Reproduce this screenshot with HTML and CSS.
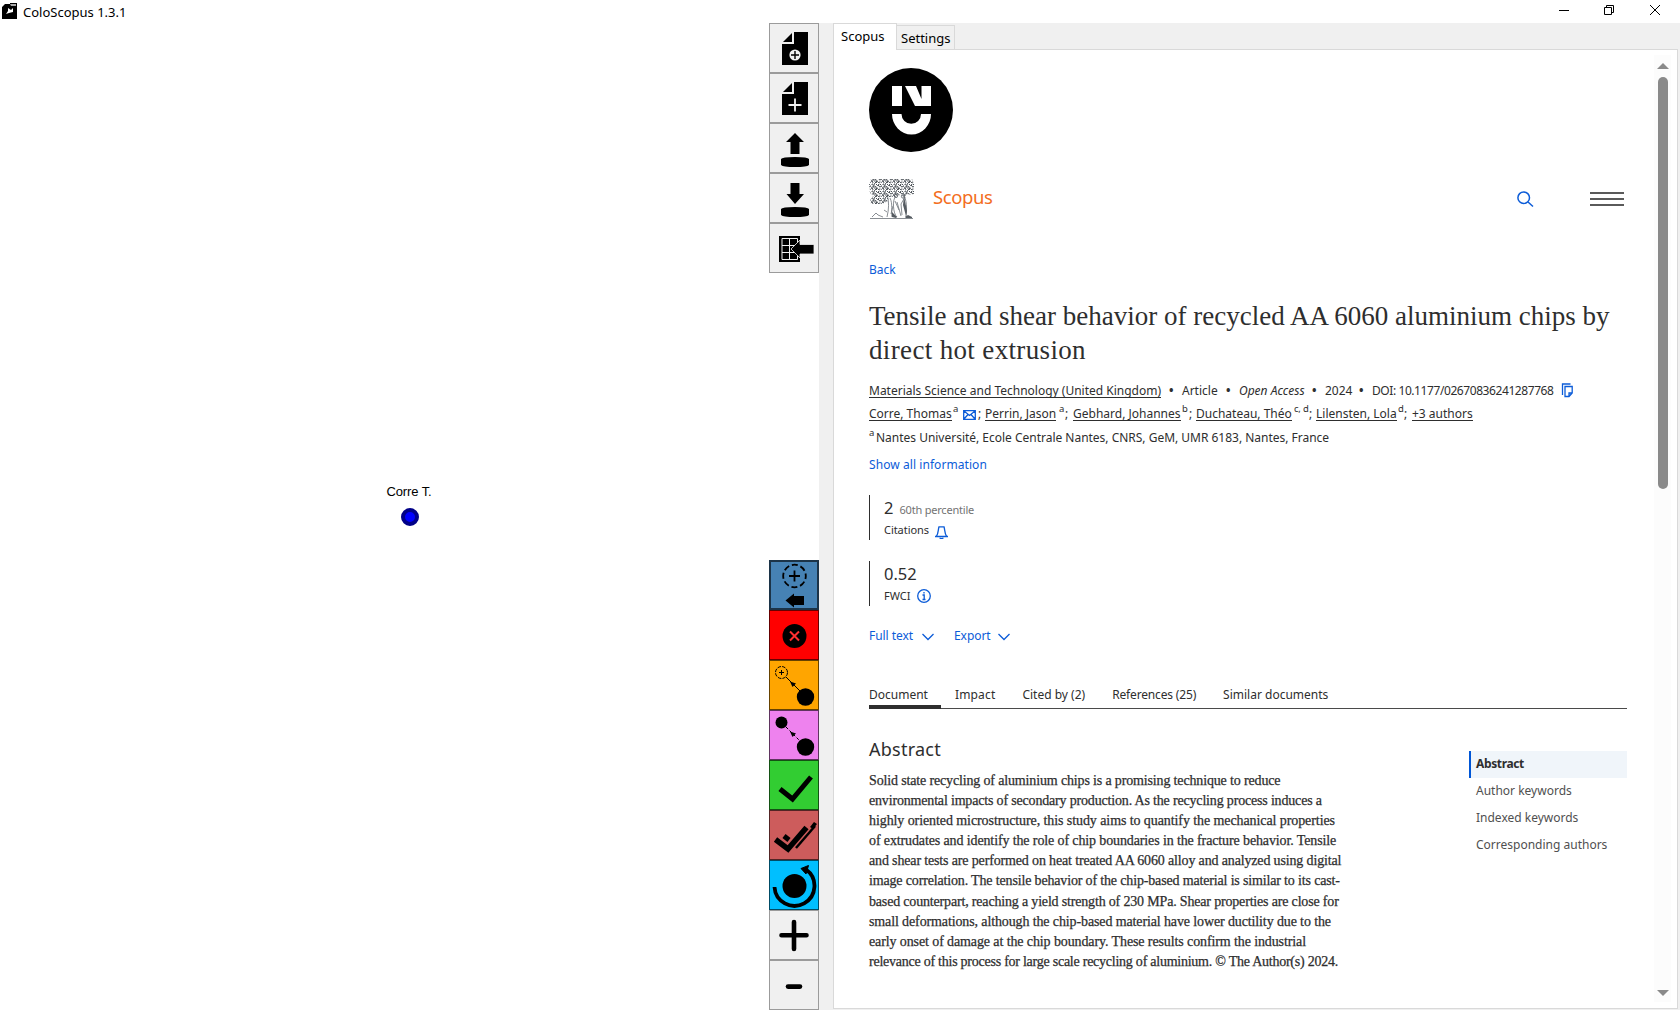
FILE: index.html
```html
<!DOCTYPE html>
<html lang="en">
<head>
<meta charset="utf-8">
<title>ColoScopus 1.3.1</title>
<link rel="stylesheet" href="styles.css">
</head>
<body>
<header class="titlebar">
  <svg class="app-icon" width="16" height="16" viewBox="0 0 16 16"><path d="M0 4L3 1H8V0H15V16H0Z"/><path d="M8 1h6v2H9z" fill="#aaa"/><path d="M6 5l3 2 2-2v4l-4 1-3 1 2-3z" fill="#fff"/></svg>
  <span class="app-title t">ColoScopus 1.3.1</span>
  <div class="win-controls">
    <svg width="10" height="10" viewBox="0 0 10 10"><path d="M0 5.5H10"/></svg>
    <svg width="10" height="10" viewBox="0 0 10 10"><path d="M.5 2.5h7v7h-7zM2.5 2.5v-2h7v7h-2"/></svg>
    <svg width="10" height="10" viewBox="0 0 10 10"><path d="M0 0L10 10M10 0L0 10"/></svg>
  </div>
</header>
<main class="workspace">
  <section class="graph">
    <div class="node"><span class="node-label t">Corre T.</span><i class="node-dot"></i></div>
  </section>
  <nav class="toolbar">
    <div class="tool-group">
      <button class="tool"><svg viewBox="0 0 50 50"><path d="M25 9H39V42H13V21H25Z"/><path d="M23 10V19H14Z"/><circle cx="26" cy="32" r="5.6" fill="#f0f0f0"/><path d="M22 32h8M26 28v8" stroke="#000" stroke-width="1.4"/></svg></button>
      <button class="tool"><svg viewBox="0 0 50 50"><path d="M25 9H39V42H13V21H25Z"/><path d="M23 10V19H14Z"/><path d="M19.500 32h13M26 25.500v13" stroke="#f0f0f0" stroke-width="1.8"/></svg></button>
      <button class="tool"><svg viewBox="0 0 50 50"><path d="M26 10L35 19H30.500V31H21.500V19H17Z"/><path d="M12 36Q13 34 26 34T40 36V42Q38 44 26 44T12 42Z"/></svg></button>
      <button class="tool"><svg viewBox="0 0 50 50"><path d="M26 31L17.500 21H21.500V10H30.500V21H35Z"/><path d="M12 36Q13 34 26 34T40 36V42Q38 44 26 44T12 42Z"/></svg></button>
      <button class="tool"><svg viewBox="0 0 50 50"><path d="M10 13H31V39H10Z"/><path d="M13 15.500H28.500V36.500H13ZM20.500 15.500v21M13 22.500h15.500M13 29.500h15.500" fill="none" stroke="#f0f0f0"/><path d="M22 26L31 17V21.500H45V31H31V35Z" stroke="#f0f0f0" stroke-width=".8"/></svg></button>
    </div>
    <div class="tool-group">
      <button class="tool tool-steel"><svg viewBox="0 0 50 50"><circle cx="25.500" cy="16" r="11.300" fill="none" stroke="#000" stroke-width="1.8" stroke-dasharray="6 2.870" stroke-dashoffset="3"/><path d="M20 16h11M25.500 10.500v11" stroke="#000" stroke-width="1.800"/><path d="M16.500 40.500L25 33.500V36H35V45H25V47.500Z"/></svg></button>
      <button class="tool tool-red"><svg viewBox="0 0 50 50"><circle cx="25.500" cy="26" r="12"/><path d="M21 21.500l9 9M30 21.500l-9 9" stroke="#ff3030" stroke-width="2"/></svg></button>
      <button class="tool tool-orange"><svg viewBox="0 0 50 50"><circle cx="12.500" cy="12.500" r="6" fill="none" stroke="#000" stroke-dasharray="3.500 1.200"/><path d="M10 12.500h5M12.500 10v5M17 17L31 31" stroke="#000"/><path d="M21 21.500L27 23.500L23.500 27Z"/><circle cx="36.500" cy="37" r="8.700"/></svg></button>
      <button class="tool tool-violet"><svg viewBox="0 0 50 50"><circle cx="12.500" cy="12.500" r="6"/><path d="M17 17L31 31" stroke="#000" stroke-dasharray="3 2"/><path d="M21 21.500L27 23.500L23.500 27Z"/><circle cx="36.500" cy="37" r="8.700"/></svg></button>
      <button class="tool tool-green"><svg viewBox="0 0 50 50"><path d="M11 29L23.500 39L42 17" fill="none" stroke="#000" stroke-width="5"/></svg></button>
      <button class="tool tool-brick"><svg viewBox="0 0 50 50"><path d="M6.500 29.500L19 39L37.500 17.500" fill="none" stroke="#000" stroke-width="5.500"/><path d="M15 26l5 4" stroke="#000" stroke-width="5"/><path d="M27 38L46 16" stroke="#000" stroke-width="2.500"/><path d="M41 17l4-5 3 2-4 5z"/></svg></button>
      <button class="tool tool-sky"><svg viewBox="0 0 50 50"><circle cx="25.500" cy="26" r="12"/><path d="M5.500 27A20 20 0 1 0 37 9.500" fill="none" stroke="#000" stroke-width="3.800"/><path d="M32 8.500L39.500 5.500L37 14Z" stroke="#000"/></svg></button>
      <button class="tool"><svg viewBox="0 0 50 50"><path d="M12.500 25.300h25M25 12v27" stroke="#000" stroke-width="4.600" stroke-linecap="round"/></svg></button>
      <button class="tool"><svg viewBox="0 0 50 50"><path d="M19 26.600h12" stroke="#000" stroke-width="4.600" stroke-linecap="round"/></svg></button>
    </div>
  </nav>
  <section class="side">
    <div class="side-tabs">
      <span class="side-tab active"><span class="t">Scopus</span></span><span class="side-tab"><span class="t">Settings</span></span>
    </div>
    <div class="browser">
      <article class="page">
        <svg class="nu-logo" viewBox="0 0 84 84"><circle cx="42" cy="42" r="42"/><path d="M23 18h10v20H23zM36 18H47L52.500 31V18H62V38H46ZM23 46h9.500a9.700 9.700 0 0 0 19.500 0h10a19.500 20.500 0 0 1-39 0z" fill="#fff"/></svg>
        <div class="brand">
          <svg class="tree" viewBox="0 0 45 40">
            <defs><pattern id="leaf" width="11" height="7" patternUnits="userSpaceOnUse"><path d="M0 1q1.500-1.500 2 0t2-.5 1 1.500M6 .5q2 0 1 1.500t2 0M10 0l1 1.500M.5 3q1 1 2-.5t1.500 1.500M5.500 2.500l1.500 1.500 1-1.500M9 4q1-2 2-.5M0 5l1.500 1.500M2.500 5.500q1.500-1.500 1.500 .5t2-.5M7 5l1.500 1.500 2-1.500M5 5.500l1-1.500M9.500 5.500v1.500" fill="none" stroke="#3f464c" stroke-width=".95"/></pattern></defs>
            <path fill="url(#leaf)" d="M2 0H43L45 4V15L42 16L38 15L35 18L30 16L25 18L20 18L19 22L13 25L2 25L1 19L5 17L1 14L0 6Z"/>
            <path d="M18.500 17C20 23 20 30 18 38M21 19C24 25 22 32 23 38M27 17C23 20 24 35 28 38M28 23L32 37M26 22L30 31M34 15C38 20 38 31 37 38M36 18L32 25L33 36M24 27L22 35M3 38l4-4 2 2 5 2M15 31l3 2M1 39.500h43" fill="none" stroke="#6b7177" stroke-width=".8"/>
            <path d="M23 33L28 38L27 39L23 38ZM35 17L38 32L37 37L34 26ZM36 38l3-2 4 2v1h-6z" fill="#555b61"/>
            <circle cx="27" cy="17" r="1.600" fill="none" stroke="#555b61" stroke-width=".8"/><circle cx="34" cy="17.500" r="1.600" fill="none" stroke="#555b61" stroke-width=".8"/>
          </svg>
          <span class="brand-name t">Scopus</span>
          <svg class="search" width="17" height="17" viewBox="0 0 17 17"><circle cx="6.700" cy="6.700" r="5.800"/><path d="M11 11L16 15.500"/></svg>
          <span class="menu"><i></i><i></i><i></i></span>
        </div>
        <a class="line back"><span class="t">Back</span></a>
        <h1><span class="h1a t">Tensile and shear behavior of recycled AA 6060 aluminium chips by</span><span class="h1b t">direct hot extrusion</span></h1>
        <div class="line meta">
          <span><u class="t">Materials Science and Technology (United Kingdom)</u></span><b>•</b>
          <span class="t m2">Article</span><b>•</b><em class="t">Open Access</em><b>•</b>
          <span class="t">2024</span><b>•</b><span class="doi t">DOI: 10.1177/02670836241287768</span>
          <svg class="copy" width="12" height="15" viewBox="0 0 12 15"><path d="M1.500 12V1H9.500M4 3.500h7.200v6.500L8 13.500H4zM11 10H8v3.500" /></svg>
        </div>
        <div class="line authors">
          <span><u class="t">Corre, Thomas</u></span><sup>a</sup>
          <svg class="mail" width="13" height="10" viewBox="0 0 13 10"><path d="M.700.700h11.600v8.600H.700zM1 1l5.500 4.500L12 1M1 9l4-4.500M12 9L8 4.500"/></svg><span>;</span>
          <span><u class="t">Perrin, Jason</u></span><sup>a</sup><span>;</span>
          <span><u class="t">Gebhard, Johannes</u></span><sup>b</sup><span>;</span>
          <span><u class="t">Duchateau, Théo</u></span><sup class="t">c, d</sup><span>;</span>
          <span><u class="t">Lilensten, Lola</u></span><sup>d</sup><span>;</span>
          <span><u class="t">+3 authors</u></span>
        </div>
        <div class="line affil"><sup>a</sup><span class="t">Nantes Université, Ecole Centrale Nantes, CNRS, GeM, UMR 6183, Nantes, France</span></div>
        <a class="line show-all"><span class="t">Show all information</span></a>
        <div class="metric">
          <div class="metric-value"><span class="num">2</span><small class="t">60th percentile</small></div>
          <div class="metric-name"><span class="t">Citations</span><svg class="bell" width="13" height="13" viewBox="0 0 13 13"><path d="M0 10.500H13M1.500 10.200C3.500 7 3 4 4 .800H9C10 4 9.500 7 11.500 10.200"/><path d="M4.500 12l2 .7 2-.7"/></svg></div>
        </div>
        <div class="metric metric-fwci">
          <div class="metric-value"><span class="num t">0.52</span></div>
          <div class="metric-name"><span class="t">FWCI</span><svg class="info" width="14" height="14" viewBox="0 0 14 14"><circle cx="7" cy="7" r="6.300"/><path d="M7 3v1.500M5.500 6h1.700v4.500M5.500 10.500h3"/></svg></div>
        </div>
        <div class="line actions">
          <a class="t">Full text</a><svg width="12" height="8" viewBox="0 0 12 8"><path d="M.500 1L6 6.500L11.500 1"/></svg>
          <a class="t">Export</a><svg width="12" height="8" viewBox="0 0 12 8"><path d="M.500 1L6 6.500L11.500 1"/></svg>
        </div>
        <nav class="doc-tabs">
          <span class="current">Document</span><span class="impact">Impact</span><span>Cited by (2)</span><span class="refs">References (25)</span><span>Similar documents</span>
        </nav>
        <div class="body">
          <section class="abstract">
            <h2>Abstract</h2>
            <p>
              <span class="t p1">Solid state recycling of aluminium chips is a promising technique to reduce</span>
              <span class="t p2">environmental impacts of secondary production. As the recycling process induces a</span>
              <span class="t p3">highly oriented microstructure, this study aims to quantify the mechanical properties</span>
              <span class="t p4">of extrudates and identify the role of chip boundaries in the fracture behavior. Tensile</span>
              <span class="t p5">and shear tests are performed on heat treated AA 6060 alloy and analyzed using digital</span>
              <span class="t p6">image correlation. The tensile behavior of the chip-based material is similar to its cast-</span>
              <span class="t p7">based counterpart, reaching a yield strength of 230 MPa. Shear properties are close for</span>
              <span class="t p8">small deformations, although the chip-based material have lower ductility due to the</span>
              <span class="t p9">early onset of damage at the chip boundary. These results confirm the industrial</span>
              <span class="t p10">relevance of this process for large scale recycling of aluminium. © The Author(s) 2024.</span>
            </p>
          </section>
          <nav class="toc">
            <a class="here">Abstract</a><a>Author keywords</a><a>Indexed keywords</a><a>Corresponding authors</a>
          </nav>
        </div>
      </article>
      <div class="scrollbar"><i class="up"></i><i class="thumb"></i><i class="down"></i></div>
    </div>
  </section>
</main>
</body>
</html>
```
FILE: styles.css
```css
* { box-sizing: border-box; }
body { margin: 0; width: 1680px; height: 1010px; overflow: hidden; background: #fff; color: #2e2e2e; font: 12px/19px "Noto Sans", sans-serif; display: flex; flex-direction: column; }
svg { display: block; flex: none; }
.t { white-space: nowrap; }

.titlebar { height: 23px; flex: none; display: flex; align-items: flex-start; padding: 3px 20px 0 2px; color: #000; font-size: 13px; line-height: 18px; }
.app-title { margin: 0 auto 0 5px; }
.win-controls { display: flex; gap: 35px; padding-top: 2px; }
.win-controls svg { fill: none; stroke: #000; stroke-width: 1; }
.win-controls svg:last-child { margin-left: 1px; }

.workspace { flex: 1; display: flex; min-height: 0; background: #f0f0f0; }
.graph { width: 769px; background: #fff; position: relative; }
.node { position: absolute; left: 369px; top: 460px; width: 81px; display: flex; flex-direction: column; align-items: center; gap: 7px; }
.node-label { font: 13px/18px "Liberation Sans", sans-serif; letter-spacing: -.12px; margin-left: -1px; color: #000; }
.node-dot { width: 18px; height: 18px; border-radius: 50%; background: #00f; border: 4px solid #000088; }

.toolbar { width: 50px; background: #fff; display: flex; flex-direction: column; justify-content: space-between; }
.tool { display: block; width: 50px; height: 50px; padding: 0; border: 1px solid #9b9b9b; background: #f0f0f0; }
.tool svg { width: 50px; height: 50px; margin: -1px; }
.tool-steel { background: #4682b4; border: 2px solid #1c3448; }
.tool-steel svg { margin: -2px; }
.tool-red { background: #f00; border-color: #600; }
.tool-orange { background: #ffa500; border-color: #664200; }
.tool-violet { background: #ee82ee; border-color: #5f345f; }
.tool-green { background: #32cd32; border-color: #145214; }
.tool-brick { background: #cd5c5c; border-color: #522525; }
.tool-sky { background: #00bfff; border-color: #004c66; }

.side { margin-left: 14px; width: 845px; display: flex; flex-direction: column; }
.side-tabs { height: 26px; display: flex; align-items: flex-end; color: #000; font-size: 13px; line-height: 18px; }
.side-tab { height: 24px; padding: 3px 3px 0 4px; width: 58px; border: 1px solid #d9d9d9; border-width: 1px 1px 0 0; }
.side-tab.active { height: 27px; width: 64px; padding: 3px 0 0 7px; border-left-width: 1px; background: #fff; margin-bottom: -1px; position: relative; }
.browser { height: 960px; border: 1px solid #d9d9d9; background: #fff; display: flex; justify-content: space-between; padding: 0 6px 0 35px; }

.page { width: 758px; padding-top: 18px; }
.nu-logo { width: 84px; height: 84px; }
.brand { margin-top: 27px; height: 40px; display: flex; align-items: center; }
.tree { width: 45px; height: 40px; }
.brand-name { font-size: 18.500px; line-height: 28px; letter-spacing: -.4px; color: #f36d21; margin: -4px 0 0 19px; }
.search { margin-left: auto; fill: none; stroke: #0c5cd8; stroke-width: 1.500; }
.menu { width: 34px; margin: 0 3px 1px 56px; display: grid; gap: 4px; }
.menu i { height: 2px; background: #5a5a5a; }
.line { display: flex; height: 18px; }
a { color: #0c5cd8; }
.back { margin-top: 41px; }
h1 { font: 27px/34px "Liberation Serif", serif; margin: 21px 0 14px; height: 68px; }
h1 span { display: table; }
.h1b { letter-spacing: .35px; }
u { text-decoration: none; display: inline-block; height: 17px; border-bottom: 1px solid #2e2e2e; }
.meta { display: grid; grid-template-columns: 300px 13px 44px 13px 73px 13px 34px 13px 189px 12px; }
.doi { letter-spacing: -.42px; }
.copy, .mail, .bell, .info, .actions svg { fill: none; stroke: #0c5cd8; stroke-width: 1.300; }
.copy { margin-top: 2px; }
.authors { margin-top: 5px; display: grid; grid-template-columns: 84px 10px 15px 7px 74px 6px 8px 109px 7px 7px 98px 15px 7px 82px 6px 8px 60px; }
sup { font-size: 9.500px; line-height: 10px; height: 10px; margin: 0; letter-spacing: -.2px; }
.mail { margin-top: 6px; }
.affil { margin-top: 6px; letter-spacing: -.015px; }
.affil sup { width: 7px; }
.show-all { margin-top: 9px; letter-spacing: .07px; }
.metric { margin-top: 22px; height: 45px; border-left: 1px solid #2e2e2e; padding-left: 14px; }
.metric-fwci { margin-top: 21px; }
.metric-value { height: 25px; line-height: 25px; display: flex; align-items: baseline; }
.num { font-size: 16.500px; line-height: 25px; }
small { font-size: 11px; color: #737373; margin-left: 6px; letter-spacing: -.2px; }
.metric-name { display: flex; font-size: 11px; height: 18px; letter-spacing: -.05px; }
.bell { margin: 6px 0 0 6px; }
.info { margin: 3px 0 0 7px; }
.actions { margin-top: 20px; display: grid; grid-template-columns: 53px 32px 44px 12px; }
.actions a { letter-spacing: -.05px; }
.actions svg { margin-top: 7px; }
.doc-tabs { margin-top: 41px; height: 24px; display: flex; gap: 27px; border-bottom: 1px solid #4a4a4a; white-space: nowrap; }
.current { border-bottom: 4px solid #2e2e2e; width: 72px; margin-right: -13px; height: 24px; }
.impact { letter-spacing: .15px; }
.refs { letter-spacing: -.16px; }
.body { display: flex; justify-content: space-between; }
h2 { font-weight: 400; font-size: 18px; line-height: 24px; letter-spacing: .25px; margin: 28px 0 10px; }
p { margin: 0; font: 14px/20.100px "Liberation Serif", serif; -webkit-text-stroke: .25px; }
p span { display: table; }
.p1, .p5 { letter-spacing: -.15px; }
.p2, .p7 { letter-spacing: -.174px; }
.p3 { letter-spacing: -.085px; }
.p4, .p8 { letter-spacing: -.12px; }
.p6 { letter-spacing: -.157px; }
.p9 { letter-spacing: -.107px; }
.p10 { letter-spacing: -.245px; }
.toc { margin-top: 42px; width: 158px; }
.toc a { display: block; height: 27px; padding: 3px 0 0 7px; color: #505050; }
.toc .here { background: #f0f5fa; border-left: 2px solid #0056d6; padding-left: 5px; font-weight: 700; letter-spacing: -.36px; color: #2e2e2e; }
.scrollbar { width: 17px; height: 947px; margin-top: 5px; background: #fcfcfc; display: flex; flex-direction: column; align-items: center; padding: 8px 0 6px; }
.up, .down { border: 6px solid transparent; border-top: 0; border-bottom-color: #8a8a8a; }
.thumb { width: 10px; height: 412px; background: #8a8a8a; border-radius: 5px; margin: 8px 0 auto; }
.down { border-top: 6px solid #8a8a8a; border-bottom: 0; }
```
